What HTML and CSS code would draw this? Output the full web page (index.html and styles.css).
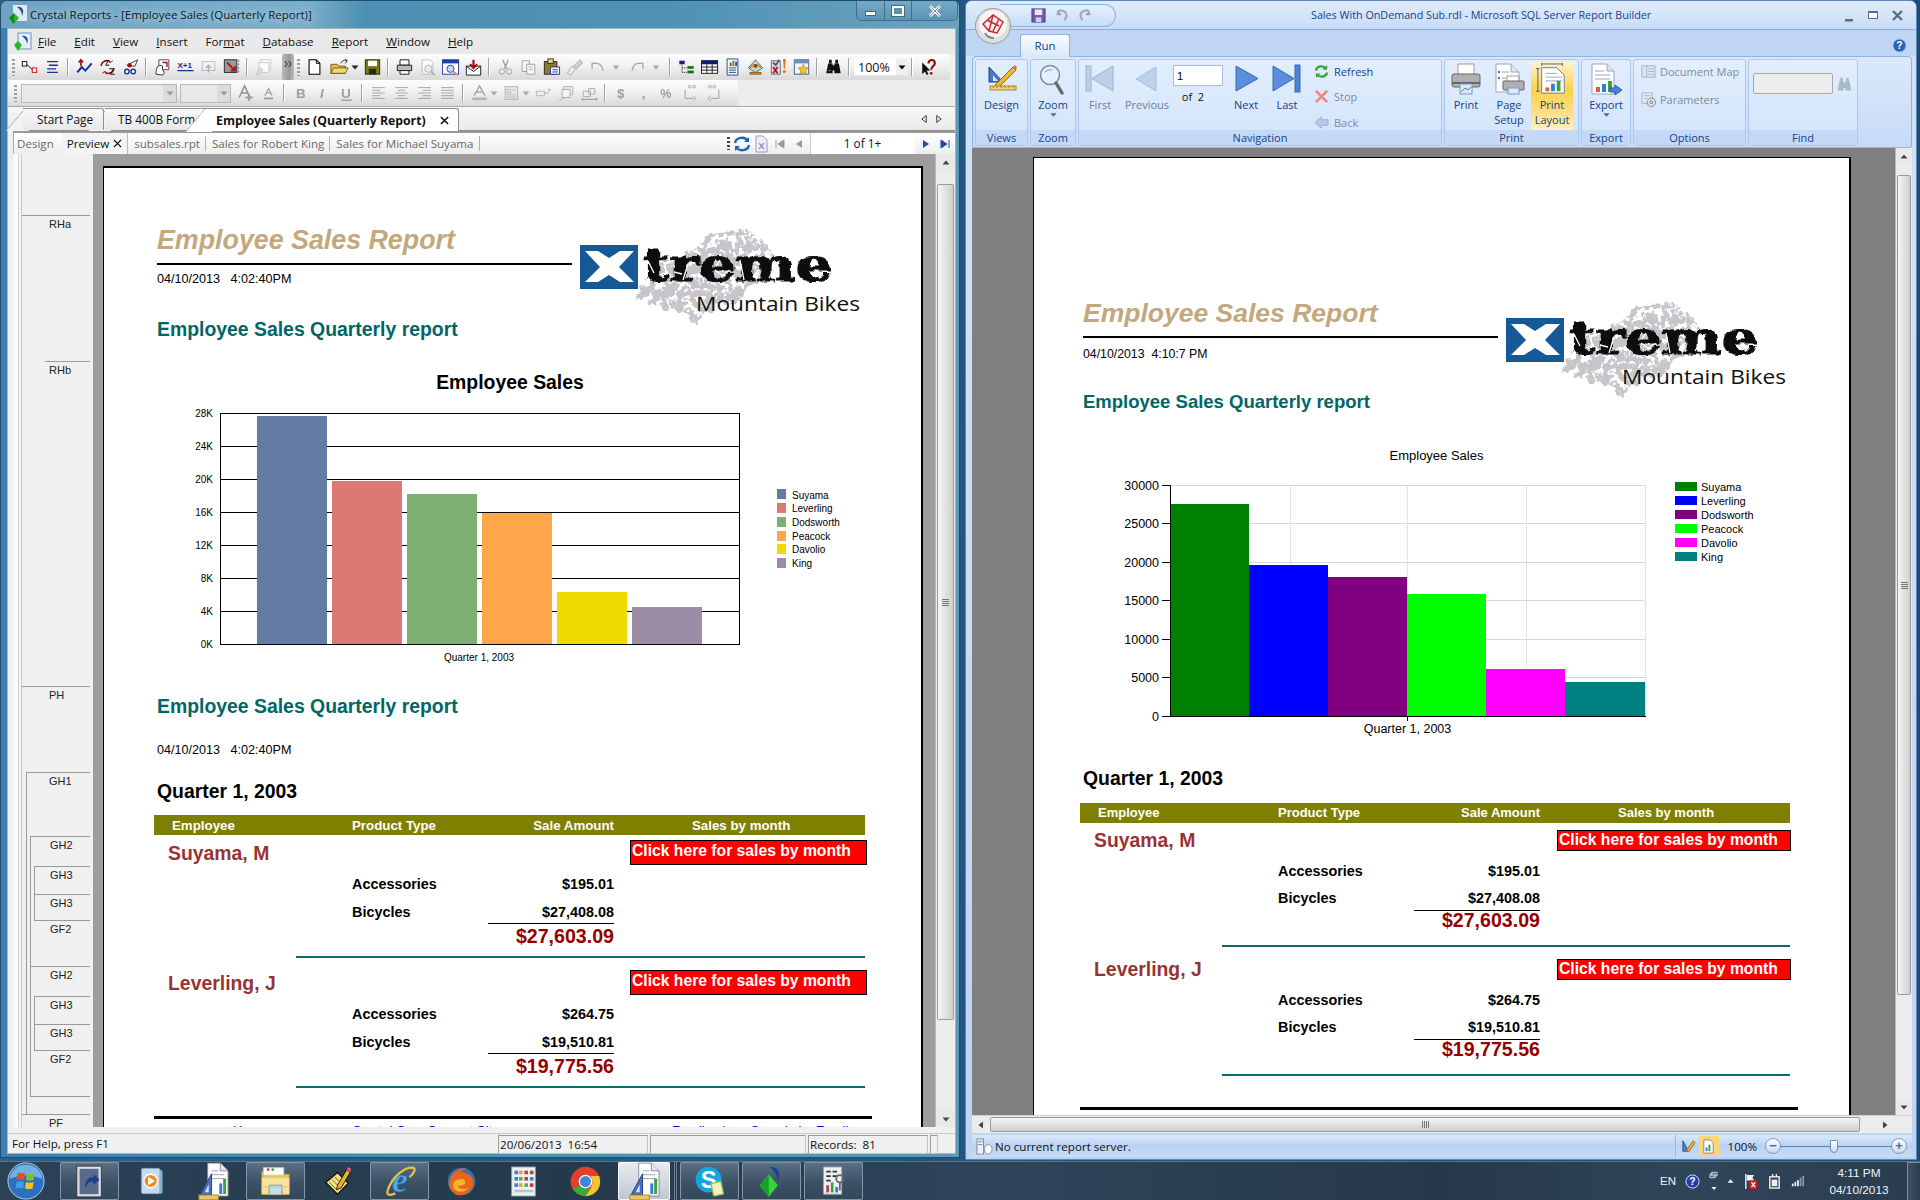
FILE: index.html
```html
<!DOCTYPE html>
<html lang="en">
<head>
<meta charset="utf-8">
<title>Crystal Reports and Report Builder</title>
<link rel="stylesheet" href="styles.css">
</head>
<body>
<svg class="defs" width="0" height="0">
  <filter id="rough" x="-5%" y="-10%" width="110%" height="120%"><feTurbulence type="fractalNoise" baseFrequency=".16" numOctaves="2" seed="4" result="n"/><feDisplacementMap in="SourceGraphic" in2="n" scale="5" xChannelSelector="R" yChannelSelector="G"/></filter>
  <filter id="tire" x="-5%" y="-5%" width="110%" height="110%"><feTurbulence type="fractalNoise" baseFrequency=".13" numOctaves="2" seed="7" result="n"/><feColorMatrix in="n" type="matrix" values="0 0 0 0 0  0 0 0 0 0  0 0 0 0 0  -14 0 0 0 8.300" result="m"/><feComposite in="SourceGraphic" in2="m" operator="in" result="c"/><feDisplacementMap in="c" in2="n" scale="12" xChannelSelector="G" yChannelSelector="R"/></filter>
  <symbol id="tri-l" viewBox="0 0 8 8"><path d="M6 0.5v7L1.5 4z"/></symbol>
  <symbol id="tri-r" viewBox="0 0 8 8"><path d="M2 0.5v7L6.5 4z"/></symbol>
  <symbol id="tri-d" viewBox="0 0 8 8"><path d="M0.5 2.5h7L4 6.5z"/></symbol>
  <symbol id="tri-u" viewBox="0 0 8 8"><path d="M0.5 5.5h7L4 1.5z"/></symbol>
  <symbol id="rb-doc" viewBox="0 0 32 40">
    <path d="M10 1h13l8 8v26H10z" fill="#fff" stroke="#8a8a9a"/><path d="M23 1v8h8" fill="#dfe6f0" stroke="#8a8a9a"/>
    <path d="M14 9h7M14 13h13M14 17h13" stroke="#9aa6b8"/>
    <rect x="22" y="22" width="3" height="11" fill="#2f7fd0"/><rect x="26" y="17" width="3" height="16" fill="#3fa03f"/>
    <path d="M2 34 14 12v22z" fill="#4a6fc0" stroke="#27407f"/><path d="M7 31l4-8v8z" fill="#d8e4f5"/>
    <rect x="1" y="34" width="20" height="5" fill="#e8c866" stroke="#a88a30"/>
  </symbol>
</svg>

<div class="desktop">
<!-- ============ Crystal Reports window ============ -->
<section class="win cr">
  <header class="cr-title">
    <svg class="cr-appicon" viewBox="0 0 20 20"><rect x="5" y="0" width="14" height="16" fill="#dfe9f4"/><path d="M9 2c5-1 8 3 5 9 0-4-2-7-5-9z" fill="#1f4f9a"/><path d="M6 8l5 5-5 6-5-6z" fill="#2bb52b"/><path d="M6 8v11l-5-6z" fill="#0d8a1d"/></svg>
    <span class="cr-title-text">Crystal Reports - [Employee Sales (Quarterly Report)]</span>
    <div class="cr-ctrl">
      <span class="cc cc-min"><i></i></span>
      <span class="cc cc-max"><i></i></span>
      <span class="cc cc-close">
        <svg viewBox="0 0 14 12" width="14" height="12"><path d="M2 1l10 10M12 1 2 11" stroke="#fff" stroke-width="3"/><path d="M2 1l10 10M12 1 2 11" stroke="#55707f" stroke-width="0.8"/></svg>
      </span>
    </div>
  </header>
  <div class="cr-client">
    <nav class="menu">
      <svg class="menu-icon" viewBox="0 0 20 20"><rect x="5" y="1" width="13" height="16" fill="#e4eefa" stroke="#6f93c0"/><path d="M9 4c5-1 7 3 5 8 0-3-2-6-5-8z" fill="#1f4f9a"/><path d="M5 9l4 4-4 6-4-6z" fill="#2bb52b"/></svg>
      <span><u>F</u>ile</span><span><u>E</u>dit</span><span><u>V</u>iew</span><span><u>I</u>nsert</span><span>For<u>m</u>at</span><span><u>D</u>atabase</span><span><u>R</u>eport</span><span><u>W</u>indow</span><span><u>H</u>elp</span>
    </nav>
    <div class="tb tb1">
      <i class="grip"></i>
      <svg class="ti" viewBox="0 0 20 20"><rect x="2" y="4" width="5" height="5" fill="#fff" stroke="#000"/><rect x="13" y="11" width="5" height="5" fill="#fff" stroke="#c00"/><path d="M7 7l6 6" stroke="#000"/></svg>
      <svg class="ti" viewBox="0 0 20 20"><path d="M4 4h12M6 8h10M4 12h10M4 16h12" stroke="#1a2f9a" stroke-width="1.5" fill="none"/></svg>
      <i class="sep"></i>
      <svg class="ti" viewBox="0 0 20 20"><path d="M2 16l5-6 4 4 7-8" stroke="#1a2f9a" stroke-width="2.2" fill="none"/><path d="M6 9V2M3.500 5 6 2l2.500 3" stroke="#a01010" stroke-width="1.800" fill="none"/></svg>
      <svg class="ti" viewBox="0 0 20 20"><path d="M3 9c0-6 8-8 10-4M17 11c0 6-8 8-10 4" stroke="#a01010" stroke-width="1.800" fill="none"/><path d="M11 2l2 3 3-2M9 18l-2-3-3 2" stroke="#a01010" fill="none"/><path d="M7 3h4l-3 5h4M12 12h5l-4 6h5" stroke="#111" stroke-width="1.100" fill="none"/></svg>
      <svg class="ti" viewBox="0 0 20 20"><circle cx="6" cy="15" r="2.500" fill="#fff" stroke="#1a2f9a" stroke-width="1.500"/><circle cx="13" cy="15" r="2.500" fill="#fff" stroke="#1a2f9a" stroke-width="1.500"/><path d="M6 8l12-6-3 7H8z" fill="#fff" stroke="#333"/><circle cx="9" cy="8" r="2.500" fill="#b01010"/></svg>
      <i class="sep"></i>
      <svg class="ti" viewBox="0 0 20 20"><path d="M6 2h11v11H6z" fill="#fff" stroke="#444"/><path d="M3 18c-1-3 1-6 1-8l3-2 3 1v4l2 3-2 3z" fill="#fff" stroke="#222"/><path d="M10 5h5v5" stroke="#b01010" stroke-width="1.500" fill="none"/></svg>
      <svg class="ti" viewBox="0 0 20 20"><text class="xp1" x="1" y="11">X+1</text><path d="M1 14h18" stroke="#1a2f9a" stroke-width="1.200"/></svg>
      <svg class="ti" viewBox="0 0 20 20" opacity=".45"><rect x="3" y="4" width="14" height="10" fill="#f4f4f4" stroke="#777"/><path d="M10 16V8M7 11l3-3 3 3" stroke="#4a6a9a" stroke-width="1.500" fill="none"/></svg>
      <svg class="ti" viewBox="0 0 20 20"><rect x="2" y="2" width="14" height="14" fill="#9a9a9a" stroke="#222"/><path d="M18 2v16" stroke="#555" stroke-dasharray="2 2"/><path d="M5 5l9 9M14 9v5H9" stroke="#b01010" stroke-width="2" fill="none"/></svg>
      <i class="sep"></i>
      <svg class="ti off" viewBox="0 0 20 20"><path d="M7 2h11v11H7z" fill="#fff" stroke="#bbb"/><path d="M5 5h11v11H5z" fill="#fff" stroke="#bbb"/><path d="M2 18l4-7 3 2-4 6z" fill="#ddd" stroke="#bbb"/></svg>
      <span class="chev"><svg viewBox="0 0 8 6" width="8" height="6"><path d="M1 0l2 3-2 3M5 0l2 3-2 3" stroke="#222" fill="none"/></svg></span>
      <i class="grip"></i>
      <svg class="ti" viewBox="0 0 20 20"><path d="M4 2h8l4 4v12H4z" fill="#fff" stroke="#000" stroke-width="1.200"/><path d="M12 2v4h4" fill="none" stroke="#000"/></svg>
      <svg class="ti ti-w" viewBox="0 0 20 20"><path d="M1 7h7l2 2h7v8H1z" fill="#e8c14e" stroke="#6a5314"/><path d="M1 17l3-6h16l-3 6z" fill="#f4d878" stroke="#6a5314"/><path d="M12 6c2-4 5-4 7-3M17 1l2 2-2 3" fill="none" stroke="#111"/></svg>
      <svg class="arrow" viewBox="0 0 8 8"><use href="#tri-d"/></svg>
      <svg class="ti" viewBox="0 0 20 20"><rect x="2" y="2" width="16" height="16" fill="#7a7a10" stroke="#222"/><rect x="5" y="3" width="10" height="6" fill="#fff"/><rect x="6" y="12" width="8" height="6" fill="#2a2a08"/></svg>
      <i class="sep"></i>
      <svg class="ti" viewBox="0 0 20 20"><path d="M5 2h10v6H5z" fill="#fff" stroke="#111"/><path d="M2 8h16v6H2z" fill="#bbb" stroke="#111"/><path d="M5 14h10v4H5z" fill="#fff" stroke="#111"/></svg>
      <svg class="ti" viewBox="0 0 20 20" opacity=".6"><path d="M4 2h9l3 3v13H4z" fill="#fff" stroke="#999"/><circle cx="11" cy="12" r="4" fill="#e6eef6" stroke="#888"/><path d="M14 15l4 4" stroke="#888" stroke-width="2"/></svg>
      <svg class="ti" viewBox="0 0 20 20"><rect x="1" y="2" width="18" height="16" fill="#fff" stroke="#1a2f9a"/><rect x="1" y="2" width="18" height="4" fill="#1a3fa5"/><circle cx="10" cy="12" r="4" fill="#bcdcf2" stroke="#1a3fa5"/><path d="M13 15l5 4" stroke="#e8921a" stroke-width="2"/></svg>
      <svg class="ti" viewBox="0 0 20 20"><path d="M2 9h16v10H2z" fill="#fff" stroke="#111"/><path d="M2 9l8 6 8-6" fill="none" stroke="#111"/><path d="M10 11V2M6 7l4 4 4-4" stroke="#a01010" stroke-width="2.400" fill="none"/></svg>
      <i class="sep"></i>
      <svg class="ti off" viewBox="0 0 20 20"><circle cx="6" cy="15" r="3" fill="none" stroke="#888"/><circle cx="14" cy="15" r="3" fill="none" stroke="#888"/><path d="M7 2l4 10M13 2 9 12" stroke="#888" stroke-width="1.500"/></svg>
      <svg class="ti off" viewBox="0 0 20 20"><path d="M3 3h8v12H3z" fill="#f6f6f6" stroke="#888"/><path d="M8 7h9v11H8z" fill="#fff" stroke="#888"/><path d="M10 10h5M10 13h5" stroke="#999"/></svg>
      <svg class="ti" viewBox="0 0 20 20"><rect x="2" y="4" width="14" height="14" fill="#8f7a30" stroke="#222"/><rect x="6" y="1" width="6" height="5" fill="#f4d878" stroke="#222"/><rect x="9" y="10" width="10" height="8" fill="#fff" stroke="#1a2f9a"/><path d="M11 13h6M11 15.500h6" stroke="#1a2f9a"/></svg>
      <svg class="ti off" viewBox="0 0 20 20"><path d="M2 17l5-8 4 3-5 7z" fill="#eee" stroke="#999"/><path d="M9 9l7-7 3 3-7 7z" fill="#ccc" stroke="#888"/></svg>
      <svg class="ti off" viewBox="0 0 20 20"><path d="M4 12V6h4M4 6c5-1 11 0 12 8" fill="none" stroke="#999" stroke-width="1.600"/></svg>
      <svg class="arrow arrow-w off" viewBox="0 0 8 8"><use href="#tri-d"/></svg>
      <svg class="ti off" viewBox="0 0 20 20"><path d="M16 12V6h-4M16 6C11 5 5 6 4 14" fill="none" stroke="#999" stroke-width="1.600"/></svg>
      <svg class="arrow arrow-w off" viewBox="0 0 8 8"><use href="#tri-d"/></svg>
      <i class="sep"></i>
      <svg class="ti" viewBox="0 0 20 20"><rect x="2" y="3" width="6" height="4" fill="#1a1ab0"/><rect x="11" y="9" width="7" height="3" fill="#107010"/><rect x="11" y="14" width="7" height="3" fill="#107010"/><path d="M5 8v8h5M5 11h5" stroke="#111" stroke-dasharray="1 1" fill="none"/></svg>
      <svg class="ti" viewBox="0 0 20 20"><rect x="1" y="3" width="18" height="14" fill="#fff" stroke="#111"/><rect x="1" y="3" width="18" height="4" fill="#111a70"/><path d="M1 10h18M1 13.500h18M7 7v10M13 7v10" stroke="#111"/></svg>
      <svg class="ti" viewBox="0 0 20 20"><path d="M4 1h12v18H4z" fill="#f4f8fc" stroke="#1a3f80"/><path d="M6 11h8M6 13.500h8M6 16h8" stroke="#1a3f80"/><rect x="7" y="5" width="2" height="4" fill="#c03030"/><rect x="10" y="3" width="2" height="6" fill="#20a020"/><rect x="13" y="4" width="2" height="5" fill="#2050c0"/></svg>
      <svg class="ti" viewBox="0 0 20 20"><path d="M2 11 10 2l8 9-8 5z" fill="#b9d8e8" stroke="#5a6a3a"/><path d="M4 11c3-5 9-5 12 0" fill="#e8c14e" stroke="#806010"/><rect x="4" y="16" width="12" height="2" fill="#c8a030" stroke="#806010"/><circle cx="10" cy="9" r="2" fill="#b03030"/></svg>
      <svg class="ti" viewBox="0 0 20 20"><path d="M2 3h10v15H2z" fill="#d8dcec" stroke="#666"/><path d="M4 10l5 7M9 10l-5 7" stroke="#c01010" stroke-width="2"/><path d="M4 5l3 3 4-6" stroke="#4a5a70" stroke-width="2" fill="none"/><path d="M15 1h3l-1 11h-1z" fill="#e87010"/><circle cx="16.500" cy="15" r="1.700" fill="#e87010"/></svg>
      <svg class="ti" viewBox="0 0 20 20"><rect x="2" y="2" width="16" height="16" fill="#eef3f8" stroke="#3a5a80"/><rect x="2" y="2" width="16" height="4" fill="#6f8fb5"/><path d="M12 7l1.800 3.600 4 .6-3 2.800.8 4-3.600-2-3.600 2 .8-4-3-2.800 4-.6z" fill="#f2c230" stroke="#9a7010" stroke-width=".6"/></svg>
      <i class="sep"></i>
      <svg class="ti" viewBox="0 0 20 20"><path d="M5 2h3v4H5zM12 2h3v4h-3z" fill="#111"/><path d="M2 17 4 6h5v11zM11 17V6h5l2 11zM9 8h2v6H9z" fill="#111"/><path d="M4 14h3" stroke="#888"/></svg>
      <i class="sep"></i>
      <span class="zoombox"><b>100%</b><span class="zoombtn"><svg viewBox="0 0 8 8" width="8" height="8"><use href="#tri-d"/></svg></span></span>
      <i class="sep"></i>
      <svg class="ti" viewBox="0 0 20 20"><path d="M3 5v13l3-3 2 4 2-1-2-4h4z" fill="#111"/><path d="M10 6c0-5 7-5 7 0 0 3-4 3-4 7" fill="none" stroke="#8a1010" stroke-width="2.400"/><circle cx="13" cy="17" r="1.500" fill="#8a1010"/></svg>
    </div>
    <div class="tb2-row">
      <div class="tb tb2">
        <i class="grip"></i>
        <span class="combo combo-font"><span class="combo-btn"><svg viewBox="0 0 8 8" width="8" height="8"><use href="#tri-d"/></svg></span></span>
        <span class="combo combo-size"><span class="combo-btn"><svg viewBox="0 0 8 8" width="8" height="8"><use href="#tri-d"/></svg></span></span>
        <svg class="ti off" viewBox="0 0 20 20"><path d="M3 15 9 2l6 13M5 10h8" stroke="#7f7f7f" stroke-width="1.800" fill="none"/><path d="M10 15h8M14 11v8" stroke="#8a8a8a" stroke-width="2"/></svg>
        <svg class="ti off" viewBox="0 0 20 20"><path d="M6 13 10 5l4 8M7 10h6" stroke="#8a8a8a" stroke-width="1.300" fill="none"/><path d="M5 16h10" stroke="#8a8a8a" stroke-width="2"/></svg>
        <i class="sep"></i>
        <svg class="ti off" viewBox="0 0 20 20"><text class="gt gt-b" x="5" y="16">B</text></svg>
        <svg class="ti off" viewBox="0 0 20 20"><text class="gt gt-i" x="6" y="16">I</text></svg>
        <svg class="ti off" viewBox="0 0 20 20"><text class="gt gt-u" x="4" y="15">U</text><path d="M4 18h12" stroke="#8a8a8a" stroke-width="1.500"/></svg>
        <i class="sep"></i>
        <svg class="ti off" viewBox="0 0 20 20"><path d="M3 4h14M3 7h9M3 10h14M3 13h9M3 16h14" stroke="#8a8a8a"/></svg>
        <svg class="ti off" viewBox="0 0 20 20"><path d="M3 4h14M6 7h8M3 10h14M6 13h8M3 16h14" stroke="#8a8a8a"/></svg>
        <svg class="ti off" viewBox="0 0 20 20"><path d="M3 4h14M8 7h9M3 10h14M8 13h9M3 16h14" stroke="#8a8a8a"/></svg>
        <svg class="ti off" viewBox="0 0 20 20"><path d="M3 4h14M3 7h14M3 10h14M3 13h14M3 16h14" stroke="#8a8a8a"/></svg>
        <i class="sep"></i>
        <svg class="ti off" viewBox="0 0 20 20"><path d="M4 13 10 2l6 11M6 9h8" stroke="#8a8a8a" stroke-width="1.500" fill="none"/><rect x="2" y="15" width="16" height="3" fill="#aaa"/></svg>
        <svg class="arrow off" viewBox="0 0 8 8"><use href="#tri-d"/></svg>
        <svg class="ti off" viewBox="0 0 20 20"><rect x="3" y="3" width="14" height="14" fill="#e6e6e6" stroke="#9a9a9a"/><path d="M5 6h4v4H5zM11 7h4M5 12h10M5 14.500h10" stroke="#aaa" fill="none"/></svg>
        <svg class="arrow off" viewBox="0 0 8 8"><use href="#tri-d"/></svg>
        <svg class="ti off" viewBox="0 0 20 20"><rect x="2" y="8" width="9" height="5" fill="#f0f0f0" stroke="#aaa"/><path d="M11 10h5M15 5l3 3M18 5l-3 3" stroke="#999"/></svg>
        <svg class="ti off" viewBox="0 0 20 20"><path d="M7 3h10v9H7z" fill="#eee" stroke="#999"/><path d="M5 6h9v9H5z" fill="#f4f4f4" stroke="#999"/><path d="M2 19l4-4 2 2" stroke="#999" fill="none"/></svg>
        <svg class="ti off" viewBox="0 0 20 20"><path d="M3 8h8v6H3zM9 5h7v6H9z" fill="#eee" stroke="#999"/><path d="M2 17h16M2 15.500v3M18 15.500v3" stroke="#777"/></svg>
        <i class="sep"></i>
        <svg class="ti off" viewBox="0 0 20 20"><text class="gt gt-b" x="5" y="16">$</text></svg>
        <svg class="ti off" viewBox="0 0 20 20"><text class="gt gt-b" x="7" y="15">,</text></svg>
        <svg class="ti off" viewBox="0 0 20 20"><text class="gt gt-b gt-wide" x="2" y="16">%</text></svg>
        <svg class="ti off" viewBox="0 0 20 20"><circle cx="9" cy="3" r="1.500" fill="none" stroke="#888"/><circle cx="14" cy="3" r="1.500" fill="none" stroke="#888"/><path d="M4 6v10h9M13 13l3 3-3 3" stroke="#888" fill="none"/></svg>
        <svg class="ti off" viewBox="0 0 20 20"><circle cx="6" cy="3" r="1.500" fill="none" stroke="#888"/><circle cx="11" cy="3" r="1.500" fill="none" stroke="#888"/><path d="M16 6v10H7M7 13l-3 3 3 3" stroke="#888" fill="none"/></svg>
      </div>
    </div>
    <div class="tabs">
      <span class="tab">Start Page</span>
      <span class="tab tab-2">TB 400B Form</span>
      <span class="tab tab-on">Employee Sales (Quarterly Report)<svg class="x" viewBox="0 0 10 10" width="9" height="9"><path d="M1 1l8 8M9 1 1 9" stroke="#000" stroke-width="1.500"/></svg></span>
      <span class="tabs-nav">
        <svg viewBox="0 0 8 10" width="7" height="10"><path d="M6 1v8L1 5z" fill="none" stroke="#222"/></svg>
        <svg viewBox="0 0 8 10" width="7" height="10"><path d="M2 1v8l5-4z" fill="none" stroke="#222"/></svg>
      </span>
    </div>
    <div class="subtabs">
      <span class="st st-dim">Design</span>
      <span class="st st-on">Preview<svg class="x" viewBox="0 0 10 10" width="9" height="9"><path d="M1 1l8 8M9 1 1 9" stroke="#000" stroke-width="1.300"/></svg></span>
      <span class="st st-doc">subsales.rpt</span>
      <span class="st st-doc">Sales for Robert King</span>
      <span class="st st-doc">Sales for Michael Suyama</span>
      <span class="subnav">
        <i class="grip grip-s"></i>
        <svg class="ni" viewBox="0 0 18 18"><path d="M2 8c1-6 10-7 13-2M16 10c-1 6-10 7-13 2" fill="none" stroke="#1c66b8" stroke-width="2.400"/><path d="M16 2v5h-5M2 16v-5h5" fill="#1c66b8"/></svg>
        <svg class="ni" viewBox="0 0 18 18"><path d="M4 1h7l4 4v12H4z" fill="#eef0f8" stroke="#9a9ac0"/><path d="M7 8l5 6M12 8l-5 6" stroke="#9a9ac0" stroke-width="1.500"/></svg>
        <svg class="nv" viewBox="0 0 12 12"><path d="M2 2v8M10 2v8L4 6z" stroke="#999" fill="#999"/></svg>
        <svg class="nv" viewBox="0 0 12 12"><path d="M9 2v8L3 6z" fill="#999"/></svg>
        <span class="pager">1 of 1+</span>
        <svg class="nv" viewBox="0 0 12 12"><path d="M3 2v8l6-4z" fill="#1f4e96"/></svg>
        <svg class="nv" viewBox="0 0 12 12"><path d="M10 2v8M2 2v8l6-4z" stroke="#1f4e96" fill="#1f4e96"/></svg>
      </span>
    </div>
    <div class="cr-body">
      <aside class="gutter">
        <div class="gutter-in">
          <div class="gs gs-top"></div>
          <div class="gs gs-rha">RHa</div>
          <div class="gs gs-rhb">RHb</div>
          <div class="gs gs-ph">PH</div>
          <div class="gbox g1">
            <div class="gs gs-gh1">GH1</div>
            <div class="gbox g2">
              <div class="gs gs-gh2">GH2</div>
              <div class="gbox g3">
                <div class="gs gs-gh3">GH3</div>
                <div class="gs gs-gh3b">GH3</div>
              </div>
              <div class="gs gs-gf2">GF2</div>
              <div class="gs gs-gh2 gs-line">GH2</div>
              <div class="gbox g3 g3-line">
                <div class="gs gs-gh3">GH3</div>
                <div class="gs gs-gh3b">GH3</div>
              </div>
              <div class="gs gs-gf2">GF2</div>
            </div>
            <div class="gs gs-gap"></div>
          </div>
          <div class="gs gs-pf">PF</div>
        </div>
      </aside>
      <main class="view">
        <article class="page page-l">
          <div class="rep-head">
            <div class="rep-head-l">
              <h1 class="rt">Employee Sales Report</h1>
              <div class="rt-rule"></div>
              <div class="rdate">04/10/2013   4:02:40PM</div>
            </div>
            <svg class="logo" viewBox="0 0 300 105" width="300" height="105">
              <path d="M177 10l10 6 6 3 10 14-5 9 2 8-12 11-10 4-6 14-14 5-10-2-22 21-12-9-19-5-29-11 8-14 6-6 4-10 13-4 10-3 7-8 14-5 5-10 14-7z" fill="#c6c6ca" filter="url(#tire)"/>
              <rect x="10" y="25" width="58" height="44" fill="#155a97"/>
              <path d="M15 31h13l11 7 11-7h14L49 47l15 15H50L39 55l-11 7H15l15-15z" fill="#fff"/>
              <text class="lg-treme" x="73" y="61" textLength="189" lengthAdjust="spacingAndGlyphs" filter="url(#rough)">treme</text>
              <path d="M78 41l6 12M118 44l-5 16M145 50l8 6M170 40l4 20M205 48l-6 10M245 50l8 4M104 52l8 2M150 40l-4 6" stroke="#fff" stroke-width="1.300"/>
              <text class="lg-mb" x="126" y="91" textLength="164" lengthAdjust="spacingAndGlyphs">Mountain Bikes</text>
            </svg>
          </div>
          <h2 class="rh rh-1">Employee Sales Quarterly report</h2>
          <svg class="chart chart-l" viewBox="0 0 817 312" width="817" height="312">
            <text class="cl-title" x="406" y="29" text-anchor="middle">Employee Sales</text>
            <rect x="116.500" y="53.500" width="519" height="231" fill="#fff" stroke="#000"/>
            <path d="M116 86.500h520M116 119.500h520M116 152.500h520M116 185.500h520M116 218.500h520M116 251.500h520" stroke="#000"/>
            <rect x="153" y="56" width="70" height="228" fill="#637ca4"/>
            <rect x="228" y="121" width="70" height="163" fill="#de7874"/>
            <rect x="303" y="134" width="70" height="150" fill="#7db174"/>
            <rect x="378" y="153" width="70" height="131" fill="#ffa54a"/>
            <rect x="453" y="232" width="70" height="52" fill="#efdb00"/>
            <rect x="528" y="247" width="70" height="37" fill="#9c8ca6"/>
            <g class="cl-ax" text-anchor="end">
              <text x="109" y="57">28K</text><text x="109" y="90">24K</text><text x="109" y="123">20K</text><text x="109" y="156">16K</text><text x="109" y="189">12K</text><text x="109" y="222">8K</text><text x="109" y="255">4K</text><text x="109" y="288">0K</text>
            </g>
            <text class="cl-ax" x="375" y="301" text-anchor="middle">Quarter 1, 2003</text>
            <rect x="673" y="129" width="9" height="10" fill="#637ca4"/><rect x="673" y="143" width="9" height="10" fill="#de7874"/><rect x="673" y="157" width="9" height="10" fill="#7db174"/><rect x="673" y="171" width="9" height="10" fill="#ffa54a"/><rect x="673" y="184" width="9" height="10" fill="#efdb00"/><rect x="673" y="198" width="9" height="10" fill="#9c8ca6"/>
            <g class="cl-ax">
              <text x="688" y="139">Suyama</text><text x="688" y="152">Leverling</text><text x="688" y="166">Dodsworth</text><text x="688" y="180">Peacock</text><text x="688" y="193">Davolio</text><text x="688" y="207">King</text>
            </g>
          </svg>
          <h2 class="rh rh-2">Employee Sales Quarterly report</h2>
          <div class="rdate rdate-2">04/10/2013   4:02:40PM</div>
          <h3 class="rq">Quarter 1, 2003</h3>
          <div class="rtable">
            <div class="rhead"><span class="c-emp">Employee</span><span class="c-pt">Product Type</span><span class="c-amt">Sale Amount</span><span class="c-mon">Sales by month</span></div>
            <div class="grp">
              <div class="g-top"><span class="emp">Suyama, M</span><a class="btn">Click here for sales by month</a></div>
              <div class="g-line"><span>Accessories</span><span>$195.01</span></div>
              <div class="g-line"><span>Bicycles</span><span>$27,408.08</span></div>
              <div class="g-sum">$27,603.09</div>
              <div class="g-rule"></div>
            </div>
            <div class="grp">
              <div class="g-top"><span class="emp">Leverling, J</span><a class="btn">Click here for sales by month</a></div>
              <div class="g-line"><span>Accessories</span><span>$264.75</span></div>
              <div class="g-line"><span>Bicycles</span><span>$19,510.81</span></div>
              <div class="g-sum">$19,775.56</div>
              <div class="g-rule"></div>
            </div>
            <div class="rfoot"></div>
            <div class="rlinks"><span class="lk-a">Home</span><span class="lk-b">Crystal Care Support Site</span><span class="lk-c">Feedback on Sample by Email</span></div>
          </div>
        </article>
      </main>
      <div class="vscroll">
        <span class="sb-arrow"><svg viewBox="0 0 8 8" width="8" height="8"><use href="#tri-u"/></svg></span>
        <span class="sb-track"><span class="sb-thumb"><i class="sb-grip"></i></span></span>
        <span class="sb-arrow"><svg viewBox="0 0 8 8" width="8" height="8"><use href="#tri-d"/></svg></span>
      </div>
    </div>
    <footer class="cr-status">
      <span class="sc sc-help">For Help, press F1</span>
      <span class="sc sc-date">20/06/2013  16:54</span>
      <span class="sc sc-blank"></span>
      <span class="sc sc-rec">Records:  81</span>
      <span class="sc sc-mini"></span>
    </footer>
  </div>
</section>

<!-- ============ Report Builder window ============ -->
<section class="win rb">
  <header class="rb-title">
    <span class="orb">
      <svg viewBox="0 0 36 36" width="36" height="36"><circle cx="18" cy="18" r="17.500" fill="#dedede" stroke="#9a9a9a"/><circle cx="18" cy="16" r="14" fill="#f4f4f4"/><path d="M8 16 18 7l10 7-6 11-8-2zM12 12l12 6M18 7l-4 16M24 11l-6 12" fill="none" stroke="#d2232a" stroke-width="1.500"/><path d="M10 25c2 4 6 5 9 5" stroke="#888" fill="none" stroke-width="2"/></svg>
    </span>
    <div class="qat">
      <svg viewBox="0 0 16 16" width="15" height="15"><rect x="1" y="1" width="14" height="14" fill="#6d5ea8" stroke="#4a3a84"/><rect x="4" y="1.500" width="8" height="6" fill="#e8e8f4"/><rect x="5" y="10" width="6" height="5" fill="#cfd0e8"/></svg>
      <svg viewBox="0 0 16 16" width="14" height="14"><path d="M4 8V3M4 3l-1 4h4M4 3c6-1 10 2 9 7l-2 4" fill="none" stroke="#9da7b5" stroke-width="2.400"/></svg>
      <svg viewBox="0 0 16 16" width="14" height="14"><path d="M12 3C6 2 2 5 3 10l2 4M12 3l1 4H9" fill="none" stroke="#9da7b5" stroke-width="2.400"/></svg>
    </div>
    <span class="rb-title-text">Sales With OnDemand Sub.rdl - Microsoft SQL Server Report Builder</span>
    <div class="rb-ctrl">
      <span class="rc"><svg viewBox="0 0 14 14" width="14" height="14"><rect x="2" y="11" width="8" height="2.500" fill="#5d6d80"/></svg></span>
      <span class="rc"><svg viewBox="0 0 14 14" width="14" height="14"><rect x="1.500" y="3.500" width="9" height="7" fill="#fff" stroke="#5d6d80"/><rect x="1" y="3" width="10" height="2" fill="#5d6d80"/></svg></span>
      <span class="rc"><svg viewBox="0 0 14 14" width="14" height="14"><path d="M2 3l9 9M11 3l-9 9" stroke="#5d6d80" stroke-width="2.400"/></svg></span>
    </div>
  </header>
  <div class="rb-tabs">
    <span class="rb-tab">Run</span>
    <svg class="rb-help" viewBox="0 0 16 16" width="15" height="15"><circle cx="8" cy="8" r="7" fill="#2d63b4" stroke="#a9c6ec"/><text class="rb-help-q" x="8" y="12" text-anchor="middle">?</text></svg>
  </div>
  <div class="ribbon">
    <div class="rg rg-views">
      <div class="rg-in">
        <div class="big">
          <svg class="big-i" viewBox="0 0 32 32"><path d="M3 4 17 19H3z" fill="#4a78c4" stroke="#27407f"/><path d="M7 12l5 6H7z" fill="#d8e4f5"/><path d="M10 21 27 4l3 3-17 17-5 2z" fill="#f2b632" stroke="#8a6a10"/><path d="M27 4l3 3 1-3-2-2z" fill="#e06a6a"/><rect x="4" y="23" width="26" height="4" fill="#f0d070" stroke="#a88a30"/><path d="M7 23v2M11 23v2M15 23v2M19 23v2M23 23v2M27 23v2" stroke="#a88a30"/></svg>
          <span>Design</span>
        </div>
      </div>
      <div class="rg-lab">Views</div>
    </div>
    <div class="rg rg-zoom">
      <div class="rg-in">
        <div class="big">
          <svg class="big-i" viewBox="0 0 32 32"><circle cx="13" cy="12" r="9.500" fill="#e4f1fc" stroke="#7d8a98" stroke-width="1.500"/><path d="M7 10c2-4 6-5 10-3-3 0-7 1-10 3z" fill="#8cb9e6"/><path d="M19 20l6 10" stroke="#6a6a6a" stroke-width="3.400" stroke-linecap="round"/></svg>
          <span>Zoom</span>
          <svg class="dd" viewBox="0 0 8 8"><use href="#tri-d"/></svg>
        </div>
      </div>
      <div class="rg-lab">Zoom</div>
    </div>
    <div class="rg rg-nav">
      <div class="rg-in">
        <div class="big big-nav big-off">
          <svg class="big-i" viewBox="0 0 32 32"><rect x="2" y="3" width="5" height="25" fill="#bcd0ea" stroke="#98b3d6"/><path d="M29 3v25L8 15.500z" fill="#bcd0ea" stroke="#98b3d6"/></svg>
          <span>First</span>
        </div>
        <div class="big big-nav big-off">
          <svg class="big-i" viewBox="0 0 32 32"><path d="M25 4v24L5 16z" fill="#bcd0ea" stroke="#a4bddd"/></svg>
          <span>Previous</span>
        </div>
        <div class="page-box"><input class="page-input" value="1" aria-label="Page"><span class="page-of">of  2</span></div>
        <div class="big big-nav">
          <svg class="big-i" viewBox="0 0 32 32"><path d="M6 3v25l22-12.500z" fill="#5b8ede" stroke="#3a68b6"/></svg>
          <span>Next</span>
        </div>
        <div class="big big-nav">
          <svg class="big-i" viewBox="0 0 32 32"><path d="M2 3v25l21-12.500z" fill="#5b8ede" stroke="#3a68b6"/><rect x="24" y="2" width="5" height="27" fill="#4f82d6" stroke="#3a68b6"/></svg>
          <span>Last</span>
        </div>
        <div class="small-col">
          <div class="sm"><svg viewBox="0 0 16 16" width="15" height="15"><path d="M2 7c1-5 8-6 11-2M14 9c-1 5-8 6-11 2" fill="none" stroke="#3e9e3e" stroke-width="2.400"/><path d="M14 1v5H9zM2 15v-5h5z" fill="#3e9e3e"/></svg><span>Refresh</span></div>
          <div class="sm sm-off"><svg viewBox="0 0 16 16" width="15" height="15"><path d="M2 2l12 12M14 2 2 14" stroke="#ec8a7a" stroke-width="3"/></svg><span>Stop</span></div>
          <div class="sm sm-off"><svg viewBox="0 0 16 16" width="15" height="15"><path d="M8 2v3h7v6H8v3L1 8z" fill="#b3cbe9" stroke="#95b1d6"/></svg><span>Back</span></div>
        </div>
      </div>
      <div class="rg-lab">Navigation</div>
    </div>
    <div class="rg rg-print">
      <div class="rg-in">
        <div class="big big-pr">
          <svg class="big-i" viewBox="0 0 32 32"><rect x="8" y="1" width="16" height="11" fill="#fff" stroke="#999"/><rect x="2" y="11" width="28" height="13" rx="2" fill="#b0b0b0" stroke="#666"/><rect x="2" y="19" width="28" height="2" fill="#666"/><rect x="10" y="21" width="12" height="10" fill="#dde9f8" stroke="#7c9ac4"/><path d="M11 29l4-4 3 2 3-3" stroke="#4a7ac0" fill="none"/></svg>
          <span>Print</span>
        </div>
        <div class="big big-pr">
          <svg class="big-i" viewBox="0 0 32 32"><path d="M3 1h15l8 8v20H3z" fill="#fff" stroke="#9aa6b8"/><path d="M18 1v8h8" fill="#dfe6f0" stroke="#9aa6b8"/><circle cx="6" cy="9" r="1.200" fill="#4a7ac0"/><circle cx="6" cy="15" r="1.200" fill="#4a7ac0"/><path d="M9 9h7M9 15h4" stroke="#9aa6b8"/><rect x="14" y="13" width="12" height="7" fill="#fff" stroke="#999"/><rect x="10" y="18" width="21" height="9" rx="1" fill="#b0b0b0" stroke="#666"/><rect x="15" y="25" width="11" height="6" fill="#dde9f8" stroke="#7c9ac4"/></svg>
          <span>Page<br>Setup</span>
        </div>
        <div class="big big-pr big-hot">
          <svg class="big-i" viewBox="0 0 34 34"><path d="M6 1h22M6 0v3M28 0v3M2 6v24M0 6h4M0 30h4" stroke="#4a5a80" fill="none"/><path d="M6 5h16l8 8v19H6z" fill="#fff" stroke="#6a7a90"/><path d="M10 11h12M10 15h18M10 19h18" stroke="#9aa6b8"/><rect x="10" y="26" width="4" height="4" fill="#e85a30"/><rect x="16" y="22" width="4" height="8" fill="#2f7fd0"/><rect x="22" y="19" width="4" height="11" fill="#3fa03f"/></svg>
          <span>Print<br>Layout</span>
        </div>
      </div>
      <div class="rg-lab">Print</div>
    </div>
    <div class="rg rg-export">
      <div class="rg-in">
        <div class="big">
          <svg class="big-i" viewBox="0 0 32 32"><path d="M2 1h15l7 7v23H2z" fill="#fff" stroke="#9aa6b8"/><path d="M17 1v7h7" fill="#dfe6f0" stroke="#9aa6b8"/><path d="M5 8h9M5 12h15M5 16h15" stroke="#9aa6b8"/><rect x="6" y="24" width="4" height="5" fill="#e85a30"/><rect x="12" y="21" width="4" height="8" fill="#2f7fd0"/><rect x="18" y="18" width="4" height="11" fill="#3fa03f"/><path d="M20 25h5v-3l7 5-7 5v-3h-5z" fill="#4f82d6" stroke="#2c5aa0"/></svg>
          <span>Export</span>
          <svg class="dd" viewBox="0 0 8 8"><use href="#tri-d"/></svg>
        </div>
      </div>
      <div class="rg-lab">Export</div>
    </div>
    <div class="rg rg-opt">
      <div class="rg-in rg-in-col">
        <div class="sm sm-off sm-wide"><svg viewBox="0 0 16 16" width="15" height="15"><rect x="1" y="2" width="14" height="12" fill="#dde6f3" stroke="#9fb0c8"/><path d="M6 2v12M8 5h6M8 8h6M8 11h6" stroke="#9fb0c8"/></svg><span>Document Map</span></div>
        <div class="sm sm-off sm-wide"><svg viewBox="0 0 16 16" width="15" height="15"><rect x="1" y="1" width="11" height="11" fill="#e8eef6" stroke="#9fb0c8"/><path d="M3 4h7M3 7h4" stroke="#9fb0c8"/><circle cx="11" cy="11" r="4.500" fill="#dfe4ea" stroke="#888"/><circle cx="11" cy="11" r="1.500" fill="none" stroke="#777"/></svg><span>Parameters</span></div>
      </div>
      <div class="rg-lab">Options</div>
    </div>
    <div class="rg rg-find">
      <div class="rg-in rg-in-find">
        <span class="find-box"></span>
        <svg viewBox="0 0 20 20" width="17" height="17"><path d="M5 2h3v4H5zM12 2h3v4h-3z" fill="#a9b8cb"/><path d="M2 17 4 6h5v11zM11 17V6h5l2 11zM9 8h2v6H9z" fill="#a9b8cb"/></svg>
      </div>
      <div class="rg-lab">Find</div>
    </div>
  </div>
  <div class="rb-body">
    <main class="rb-view">
      <article class="page page-r">
        <div class="rep-head">
          <div class="rep-head-l">
            <h1 class="rt">Employee Sales Report</h1>
            <div class="rt-rule"></div>
            <div class="rdate">04/10/2013  4:10:7 PM</div>
          </div>
          <svg class="logo" viewBox="0 0 300 105" width="300" height="105">
            <path d="M177 10l10 6 6 3 10 14-5 9 2 8-12 11-10 4-6 14-14 5-10-2-22 21-12-9-19-5-29-11 8-14 6-6 4-10 13-4 10-3 7-8 14-5 5-10 14-7z" fill="#c6c6ca" filter="url(#tire)"/>
            <rect x="10" y="25" width="58" height="44" fill="#155a97"/>
            <path d="M15 31h13l11 7 11-7h14L49 47l15 15H50L39 55l-11 7H15l15-15z" fill="#fff"/>
            <text class="lg-treme" x="73" y="61" textLength="189" lengthAdjust="spacingAndGlyphs" filter="url(#rough)">treme</text>
            <path d="M78 41l6 12M118 44l-5 16M145 50l8 6M170 40l4 20M205 48l-6 10M245 50l8 4M104 52l8 2M150 40l-4 6" stroke="#fff" stroke-width="1.300"/>
            <text class="lg-mb" x="126" y="91" textLength="164" lengthAdjust="spacingAndGlyphs">Mountain Bikes</text>
          </svg>
        </div>
        <h2 class="rh rh-1">Employee Sales Quarterly report</h2>
        <svg class="chart chart-r" viewBox="0 0 817 312" width="817" height="312">
          <text class="cr-ctitle" x="402.500" y="30" text-anchor="middle">Employee Sales</text>
          <path d="M136 55.500h475M136 93.500h475M136 132.500h475M136 170.500h475M136 209.500h475M136 247.500h475" stroke="#d8d8d8"/>
          <path d="M256.500 55v231M373.500 55v231M492.500 55v231M611.500 55v231" stroke="#cfcfcf" stroke-dasharray="1 1"/>
          <rect x="136" y="74" width="79" height="212" fill="#008000"/>
          <rect x="215" y="135" width="79" height="151" fill="#0000ff"/>
          <rect x="294" y="147" width="79" height="139" fill="#800080"/>
          <rect x="373" y="164" width="79" height="122" fill="#00ff00"/>
          <rect x="452" y="239" width="79" height="47" fill="#ff00ff"/>
          <rect x="531" y="252" width="80" height="34" fill="#008080"/>
          <path d="M136.500 55v232M128 286.500h484M128 55.500h8M128 93.500h8M128 132.500h8M128 170.500h8M128 209.500h8M128 247.500h8M373.500 286v5" stroke="#000"/>
          <g class="cr-ax" text-anchor="end">
            <text x="125" y="60">30000</text><text x="125" y="98">25000</text><text x="125" y="137">20000</text><text x="125" y="175">15000</text><text x="125" y="214">10000</text><text x="125" y="252">5000</text><text x="125" y="291">0</text>
          </g>
          <text class="cr-ax" x="373.500" y="303" text-anchor="middle">Quarter 1, 2003</text>
          <rect x="641" y="52" width="22" height="9" fill="#008000"/><rect x="641" y="66" width="22" height="9" fill="#0000ff"/><rect x="641" y="80" width="22" height="9" fill="#800080"/><rect x="641" y="94" width="22" height="9" fill="#00ff00"/><rect x="641" y="108" width="22" height="9" fill="#ff00ff"/><rect x="641" y="122" width="22" height="9" fill="#008080"/>
          <g class="cr-leg">
            <text x="667" y="61">Suyama</text><text x="667" y="75">Leverling</text><text x="667" y="89">Dodsworth</text><text x="667" y="103">Peacock</text><text x="667" y="117">Davolio</text><text x="667" y="131">King</text>
          </g>
        </svg>
        <h3 class="rq">Quarter 1, 2003</h3>
        <div class="rtable">
          <div class="rhead"><span class="c-emp">Employee</span><span class="c-pt">Product Type</span><span class="c-amt">Sale Amount</span><span class="c-mon">Sales by month</span></div>
          <div class="grp">
            <div class="g-top"><span class="emp">Suyama, M</span><a class="btn">Click here for sales by month</a></div>
            <div class="g-line"><span>Accessories</span><span>$195.01</span></div>
            <div class="g-line"><span>Bicycles</span><span>$27,408.08</span></div>
            <div class="g-sum">$27,603.09</div>
            <div class="g-rule"></div>
          </div>
          <div class="grp">
            <div class="g-top"><span class="emp">Leverling, J</span><a class="btn">Click here for sales by month</a></div>
            <div class="g-line"><span>Accessories</span><span>$264.75</span></div>
            <div class="g-line"><span>Bicycles</span><span>$19,510.81</span></div>
            <div class="g-sum">$19,775.56</div>
            <div class="g-rule"></div>
          </div>
          <div class="rfoot"></div>
        </div>
      </article>
    </main>
    <div class="vscroll vscroll-r">
      <span class="sb-arrow"><svg viewBox="0 0 8 8" width="8" height="8"><use href="#tri-u"/></svg></span>
      <span class="sb-track"><span class="sb-thumb"><i class="sb-grip"></i></span></span>
      <span class="sb-arrow"><svg viewBox="0 0 8 8" width="8" height="8"><use href="#tri-d"/></svg></span>
    </div>
  </div>
  <div class="hscroll">
    <span class="sb-arrow"><svg viewBox="0 0 8 8" width="8" height="8"><use href="#tri-l"/></svg></span>
    <span class="hs-thumb"><i class="hs-grip"></i></span>
    <span class="sb-arrow"><svg viewBox="0 0 8 8" width="8" height="8"><use href="#tri-r"/></svg></span>
  </div>
  <footer class="rb-status">
    <svg class="rb-st-ico" viewBox="0 0 18 18" width="17" height="17"><rect x="1" y="1" width="7" height="16" fill="#eef1f6" stroke="#7a8aa0"/><path d="M2 4h5M2 7h5" stroke="#7a8aa0"/><ellipse cx="13" cy="12" rx="4" ry="5" fill="#fff" stroke="#7a8aa0"/></svg>
    <span class="rb-st-text">No current report server.</span>
    <div class="rb-st-right">
      <span class="st-ico"><svg viewBox="0 0 16 16" width="15" height="15"><path d="M2 2l6 11H2z" fill="#5a80c4" stroke="#344f85"/><path d="M6 12 13 2l2 2-7 10z" fill="#f2b632" stroke="#8a6a10"/></svg></span>
      <span class="st-ico st-ico-on"><svg viewBox="0 0 16 16" width="15" height="15"><path d="M3 1h7l3 3v11H3z" fill="#fff" stroke="#7a8aa0"/><rect x="5" y="9" width="2" height="4" fill="#2f7fd0"/><rect x="8" y="6" width="2" height="7" fill="#3fa03f"/></svg></span>
      <span class="rb-pct">100%</span>
      <span class="zb">−</span>
      <span class="slider"><i></i></span>
      <span class="zb">+</span>
    </div>
  </footer>
</section>
</div>

<!-- ============ Taskbar ============ -->
<footer class="taskbar">
  <span class="start">
    <svg viewBox="0 0 40 40" width="38" height="38"><circle cx="20" cy="20" r="19" fill="#2a6fc0" stroke="#bcd4ea" stroke-width="1"/><path d="M3 18a17 15 0 0 1 34 0c-10-5-24-5-34 0z" fill="#8fc3ee" opacity=".75"/><path d="M11 12c3-1 5-1 8 0l-1 7c-3-1-5-1-8 0z" fill="#e2522a"/><path d="M21 12c3 1 5 1 8 0l-1 7c-3 1-5 1-8 0z" fill="#7ebf3a"/><path d="M10 21c3-1 5-1 8 0l-1 7c-3-1-5-1-8 0z" fill="#3e9de0"/><path d="M20 21c3 1 5 1 8 0l-1 7c-3 1-5 1-8 0z" fill="#f4c430"/></svg>
  </span>
  <span class="tk tk-on"><svg viewBox="0 0 32 36" width="29" height="33"><rect x="2" y="1" width="27" height="34" fill="#dbe0e8" stroke="#333"/><rect x="5" y="4" width="21" height="28" fill="#5a6a8a"/><path d="M11 25c0-9 4-12 10-12l-1-4 7 7-7 6v-4c-5 0-6 2-9 7z" fill="#1f3f8a"/></svg></span>
  <span class="tk"><svg viewBox="0 0 32 36" width="27" height="32"><rect x="7" y="5" width="22" height="28" rx="2" fill="#8fb7d8"/><rect x="4" y="3" width="22" height="30" rx="2" fill="#c5dcee" stroke="#7a9ebe"/><circle cx="15" cy="18" r="8" fill="#f08a20" stroke="#fff" stroke-width="1.500"/><path d="M12 13v10l8-5z" fill="#fff"/></svg></span>
  <span class="tk"><svg width="31" height="39" viewBox="0 0 32 40"><use href="#rb-doc"/></svg></span>
  <span class="tk tk-on"><svg viewBox="0 0 36 36" width="33" height="33"><path d="M3 7h10l3 3h17v22H3z" fill="#e9c85a" stroke="#b08a28"/><rect x="5" y="3" width="22" height="8" fill="#fff" stroke="#ccc"/><circle cx="10" cy="5" r="1.500" fill="#d33"/><circle cx="15" cy="5" r="1.500" fill="#3a3"/><path d="M3 14h30v18H3z" fill="#f6e29a"/><path d="M11 32V22h14v10" fill="#bfe0f0" stroke="#6a9ab8"/><path d="M3 24h30" stroke="#d8c070"/></svg></span>
  <span class="tk"><svg viewBox="0 0 32 36" width="29" height="33"><path d="M3 19 16 8l12 12-12 12z" fill="#f4e27a" stroke="#111" stroke-width="1.500"/><path d="M7 19l9 9M10 16l9 9M13 13l9 9" stroke="#555"/><path d="M16 22 26 5l4 3-10 17-5 2z" fill="#e8b032" stroke="#111"/><path d="M26 5l4 3 1-4-3-2z" fill="#e05a70"/></svg></span>
  <span class="tk tk-on"><svg viewBox="0 0 36 36" width="34" height="34"><text class="ie-e" x="18" y="30" text-anchor="middle">e</text><path d="M5 28C10 12 24 3 32 4 35 5 33 10 28 14" fill="none" stroke="#f0c040" stroke-width="2.400"/><path d="M5 28c-2 5 3 6 8 3" fill="none" stroke="#f0c040" stroke-width="2.400"/></svg></span>
  <span class="tk"><svg viewBox="0 0 36 36" width="33" height="33"><circle cx="18" cy="18" r="15" fill="#3a6fb0"/><path d="M5 23C3 10 15 2 24 4c-4 1-6 2-7 4 6-1 13 3 14 10 1 9-7 15-15 15C10 33 6 28 5 23z" fill="#e8651c"/><path d="M9 24c-1-6 4-9 8-8 0-2 5-1 5 3s-7 4-8 3c0 4 7 6 12 2-3 6-14 8-17 0z" fill="#f5b62c"/></svg></span>
  <span class="tk"><svg viewBox="0 0 32 36" width="29" height="33"><rect x="3" y="2" width="26" height="32" fill="#eef2f6" stroke="#9aa6b4"/><rect x="6" y="6" width="4" height="4" fill="#4a7ac0"/><rect x="11" y="6" width="4" height="4" fill="#e8a030"/><rect x="17" y="6" width="4" height="4" fill="#c04040"/><rect x="23" y="6" width="4" height="4" fill="#8a5a30"/><rect x="6" y="13" width="4" height="4" fill="#4a7ac0"/><rect x="11" y="13" width="4" height="4" fill="#4ab050"/><rect x="17" y="13" width="4" height="4" fill="#c04040"/><rect x="23" y="13" width="4" height="4" fill="#4a7ac0"/><rect x="6" y="20" width="4" height="4" fill="#4a7ac0"/><rect x="11" y="20" width="4" height="4" fill="#e8a030"/><rect x="17" y="20" width="4" height="4" fill="#4ab050"/><rect x="23" y="20" width="4" height="4" fill="#c04040"/><rect x="6" y="27" width="21" height="3" fill="#b8c4d0"/></svg></span>
  <span class="tk"><svg viewBox="0 0 36 36" width="33" height="33"><circle cx="18" cy="18" r="16" fill="#e0402c"/><path d="M18 18 4 26A16 16 0 0 1 6 7z" fill="#e0402c"/><path d="M18 34A16 16 0 0 1 4 26l8-4 6 4 6-1z" fill="#3ea63e"/><path d="M34 18a16 16 0 0 1-16 16l6-9 2-7-2-6h9z" fill="#f4c430"/><circle cx="18" cy="18" r="7.500" fill="#fff"/><circle cx="18" cy="18" r="6" fill="#3f86e0"/></svg></span>
  <span class="tk tk-lit"><svg width="31" height="39" viewBox="0 0 32 40"><use href="#rb-doc"/></svg></span>
  <i class="tk-div"></i>
  <span class="tk tk-on"><svg viewBox="0 0 36 36" width="33" height="33"><circle cx="17" cy="16" r="14" fill="#14a6e3"/><text class="sky-s" x="17" y="25" text-anchor="middle">S</text><rect x="21" y="19" width="11" height="14" rx="1" fill="#f4f0c8" stroke="#9fbf3a" stroke-width="1.500" transform="rotate(-12 26 26)"/></svg></span>
  <span class="tk tk-on"><svg viewBox="0 0 36 36" width="33" height="33"><path d="M16 2c9-1 13 7 9 15-1-6-4-11-9-15z" fill="#1f3f9a"/><path d="M15 10l10 12-10 13L5 22z" fill="#39d13c"/><path d="M15 10v25L5 22z" fill="#18a022"/></svg></span>
  <span class="tk tk-on"><svg viewBox="0 0 32 36" width="29" height="33"><path d="M5 2h20v30H5z" fill="#eef2f6" stroke="#9aa6b4"/><path d="M8 7h5M15 7h5M8 12h5M15 12h5M8 17h5" stroke="#333" stroke-width="2"/><rect x="8" y="22" width="3" height="8" fill="#c04040"/><rect x="13" y="19" width="3" height="11" fill="#3fa03f"/><rect x="18" y="24" width="3" height="6" fill="#2f7fd0"/><circle cx="23" cy="15" r="4" fill="none" stroke="#666" stroke-width="2"/><path d="M23 19v9" stroke="#666" stroke-width="2"/></svg></span>
  <div class="tray">
    <span class="tray-en">EN</span>
    <svg viewBox="0 0 16 16" width="15" height="15"><circle cx="8" cy="8" r="7" fill="#1f3fb0" stroke="#dfe8f4"/><text class="tray-q" x="8" y="12" text-anchor="middle">?</text></svg>
    <span class="tray-stack"><svg viewBox="0 0 10 8" width="9" height="8"><path d="M3 1h6v4H3zM1 3h6v4H1z" fill="none" stroke="#dfe8f4"/></svg><svg viewBox="0 0 8 8" width="6" height="6" class="tray-ar"><use href="#tri-d"/></svg></span>
    <svg viewBox="0 0 8 8" width="7" height="7" class="tray-ar"><use href="#tri-u"/></svg>
    <svg viewBox="0 0 16 18" width="15" height="17"><path d="M3 1v16" stroke="#eee" stroke-width="1.500"/><path d="M4 2h8l-2 3 2 3H4z" fill="#f2f2f2"/><rect x="7" y="8" width="8" height="9" rx="1" fill="#d02020"/><path d="M9 10l4 5M13 10l-4 5" stroke="#fff" stroke-width="1.300"/></svg>
    <svg viewBox="0 0 16 18" width="15" height="17"><rect x="3" y="4" width="10" height="12" fill="none" stroke="#eee" stroke-width="1.500"/><rect x="5" y="7" width="6" height="7" fill="#eee"/><path d="M6 1v3M10 1v3" stroke="#eee" stroke-width="1.500"/></svg>
    <svg viewBox="0 0 16 16" width="14" height="14"><rect x="1" y="11" width="2" height="3" fill="#eee"/><rect x="4" y="9" width="2" height="5" fill="#eee"/><rect x="7" y="7" width="2" height="7" fill="#eee"/><rect x="10" y="4" width="2" height="10" fill="#8a98a6"/><rect x="13" y="2" width="2" height="12" fill="#8a98a6"/></svg>
    <div class="clock"><span>4:11 PM</span><span>04/10/2013</span></div>
    <span class="showdesk"></span>
  </div>
</footer>
</body>
</html>
```

FILE: styles.css
```css
* { box-sizing: border-box; }
html, body { margin: 0; padding: 0; }
body {
  width: 1920px; height: 1200px; overflow: hidden;
  display: flex; flex-direction: column;
  background: #1d3a55;
  font-family: "Open Sans", "Noto Sans", sans-serif;
  font-size: 12px; color: #111;
}
.defs { position: absolute; }
svg { display: block; flex: none; }
i { display: block; font-style: normal; }
h1, h2, h3 { margin: 0; }

.desktop { position: relative; height: 1161px; flex: none; background: linear-gradient(90deg, #2a5f8a, #1c4c74); }
.win { position: absolute; top: 0; display: flex; flex-direction: column; overflow: hidden; }

/* ---------- Crystal Reports ---------- */
.cr {
  left: 0; width: 960px; height: 1158px;
  background: linear-gradient(90deg, #3f7fb0 0, #4b8fb4 50%, #5a9ab8 100%);
  border: 1px solid #1f4d70; border-radius: 7px 7px 0 0;
}
.cr-title { height: 27px; flex: none; display: flex; align-items: center; padding-left: 7px; position: relative;
  background: linear-gradient(90deg, #6ea3c4 0, #7aaec9 32%, #4d90b3 38%, #4f92b4 70%, #6ba3bf 100%); }
.cr-appicon { width: 20px; height: 20px; }
.cr-title-text { margin-left: 2px; font-size: 11.500px; color: #0c1a24; text-shadow: 0 0 6px #b8d8e8, 0 0 10px #b8d8e8; white-space: nowrap; }
.cr-ctrl { margin-left: auto; margin-right: 1px; align-self: flex-start; display: flex; height: 20px;
  border: 1px solid #3d6f8f; border-top: 0; border-radius: 0 0 5px 5px; background: linear-gradient(#78aac6, #5a93b1); }
.cc { display: flex; align-items: center; justify-content: center; height: 19px; border-right: 1px solid #3d6f8f; }
.cc:last-child { border-right: 0; }
.cc-min { width: 28px; } .cc-max { width: 27px; } .cc-close { width: 45px; }
.cc-min i { width: 11px; height: 5px; margin-top: 5px; background: #fff; border: 1px solid #45687e; }
.cc-max i { width: 12px; height: 10px; background: #5d94b0; border: 2px solid #fff; outline: 1px solid #45687e; }
.cr-client { flex: 1; min-height: 0; margin: 0 3px 3px 6px; background: #f0f0f0; border: 1px solid #a5b3bd; display: flex; flex-direction: column; }

.menu { height: 25px; flex: none; display: flex; align-items: center; gap: 18px; background: #e9e9e9; font-size: 11.600px; padding-left: 5px; color: #111; }
.menu-icon { width: 20px; height: 20px; margin-right: -13px; }
.tb { display: flex; align-items: center; flex: none; height: 26px; background: linear-gradient(#fdfdfd, #f1f1f1 45%, #d9d9d9); }
.tb1 { padding-left: 1px; border-radius: 3px; margin-right: 5px; }
.tb2-row { height: 27px; flex: none; background: #ececec; display: flex; border-bottom: 1px solid #aaa; }
.tb2 { padding-left: 3px; width: 730px; height: 26px; border-radius: 3px; }
.grip { width: 3px; height: 17px; margin: 0 3px; flex: none; background: repeating-linear-gradient(#9d9d9d 0 2px, transparent 2px 4px); }
.ti { width: 23px; height: 18px; padding: 0 2.500px; flex: none; }
.ti-w { width: 26px; }
.off { opacity: .8; }
.arrow { width: 10px; height: 8px; fill: #222; flex: none; margin-left: -2px; margin-right: 1px; }
.arrow.off { fill: #999; }
.arrow-w { margin-left: 2px; margin-right: 5px; }
.sep { width: 1px; height: 18px; margin: 0 5px 0 3px; flex: none; background: #a0a0a0; box-shadow: 1px 0 #fff; }
.xp1 { font: bold 9px "Liberation Sans", sans-serif; fill: #1a2f9a; }
.chev { width: 12px; height: 26px; margin-left: 7px; flex: none; display: flex; justify-content: center; padding-top: 7px; background: linear-gradient(90deg, #bbb, #999 60%, #bbb); border-radius: 2px; }
.zoombox { width: 54px; height: 16px; flex: none; display: flex; justify-content: space-between; align-items: center; background: #fff; font-size: 12.500px; padding-left: 4px; }
.zoombox b { font-weight: 400; }
.zoombtn { width: 12px; height: 16px; background: #eee; display: flex; align-items: center; justify-content: center; }
.combo { height: 19px; flex: none; border: 1px solid #b8b8b8; background: #e9e9e9; display: flex; justify-content: flex-end; }
.combo-btn { width: 13px; display: flex; align-items: center; justify-content: center; fill: #999; background: #dcdcdc; }
.combo-font { width: 156px; margin-left: 1px; }
.combo-size { width: 51px; margin: 0 3px; }
.gt { font-family: "Liberation Sans", sans-serif; font-size: 15px; fill: #8a8a8a; }
.gt-b { font-weight: 700; }
.gt-i { font-style: italic; font-weight: 700; }
.gt-u { font-weight: 700; }
.gt-wide { font-size: 14px; }

.tabs { height: 24px; flex: none; display: flex; align-items: flex-end; padding-left: 15px; background: linear-gradient(#f6f6f6, #ebebeb); border-bottom: 1px solid #8d8d8d; position: relative; z-index: 0; }
.tab { position: relative; height: 22px; line-height: 21px; padding: 0 10px 0 14px; font-size: 11.800px; border: 1px solid #8d8d8d; border-bottom: 0; border-left: 0; border-radius: 0 3px 0 0; background: linear-gradient(#f8f8f8, #e8e8e8); color: #111; }
.tab::before { content: ""; position: absolute; z-index: -1; left: -8px; top: -1px; width: 22px; height: 22px; background: #f2f2f2; border-left: 1px solid #8d8d8d; border-top: 1px solid #8d8d8d; transform: skewX(-40deg); border-radius: 2px 0 0 0; }
.tab-2 { margin-left: 1px; padding: 0 12px 0 13px; }
.tab-on { margin-left: -8px; height: 23px; margin-bottom: -1px; padding: 0 9px 0 16px; font-weight: 700; background: #fff; display: flex; align-items: center; gap: 14px; z-index: 2; font-size: 12.250px; }
.tab-on::before { background: #fff; left: -5px; width: 26px; height: 23px; }
.tabs-nav { margin-left: auto; margin-right: 13px; margin-bottom: 6px; display: flex; gap: 7px; }

.subtabs { height: 23px; flex: none; display: flex; align-items: center; margin: 0 0 0 5px; border-top: 2px solid #999; border-left: 1px solid #aaa; background: linear-gradient(#fff, #ededed); font-size: 11.600px; color: #6a6a6a; }
.st { height: 21px; line-height: 21px; white-space: nowrap; padding: 0 6px; }
.st-dim { padding: 0 8px 0 3px; }
.st-on { background: #f4f4f4; color: #111; display: flex; align-items: center; gap: 4px; padding: 0 5px; border-right: 1px solid #bbb; }
.st-doc { border-right: 1px solid #b0b0b0; height: 15px; line-height: 15px; padding: 0 5px 0 6px; }
.subnav { margin-left: auto; display: flex; align-items: center; gap: 1px; padding-right: 1px; }
.grip-s { width: 3px; height: 13px; margin: 0 2px; background: repeating-linear-gradient(#444 0 2px, transparent 2px 4px); }
.ni { width: 18px; height: 18px; }
.nv { width: 18px; height: 12px; }
.pager { width: 105px; height: 21px; line-height: 21px; background: #fff; text-align: center; color: #111; font-size: 11.800px; margin: 0 1px; padding-right: 1px; border-left: 1px solid #ccc; }

.cr-body { flex: 1; min-height: 0; display: flex; margin-left: 5px; }
.gutter { width: 80px; flex: none; padding-left: 8px; background: linear-gradient(90deg, #f6f6f6, #fff 6%, #c9c9c9 7%, #f5f5f5 8%, #f5f5f5); overflow: hidden; }
.gutter-in { background: #f0f0f0; border-left: 1px solid #c8c8c8; font-size: 11px; color: #222; }
.gs { border-top: 1px solid #9a9a9a; padding: 2px 0 0 0; text-align: center; font-family: "Liberation Sans", sans-serif; overflow: hidden; margin-right: 3px; }
.gs-top { height: 61px; border-top-color: transparent; }
.gs-rha { height: 146px; text-align: left; padding-left: 27px; }
.gs-rhb { height: 325px; margin-left: 23px; text-align: left; padding-left: 4px; }
.gs-ph { height: 86px; text-align: left; padding-left: 27px; }
.gbox { border-top: 1px solid #9a9a9a; border-left: 1px solid #9a9a9a; margin-right: 3px; }
.gbox .gbox, .gbox .gs { margin-right: 0; }
.g1 { height: 342px; margin-left: 4px; }
.g2 { height: 261px; margin-left: 3px; border-bottom: 1px solid #9a9a9a; }
.g3 { height: 55px; margin-left: 3px; border-bottom: 1px solid #9a9a9a; }
.g1 > .gs { border-top: 0; text-align: left; padding-left: 22px; }
.g2 > .gs { border-top: 0; text-align: left; padding-left: 19px; }
.g3 > .gs { border-top: 0; text-align: left; padding-left: 15px; }
.g1 > .gs-gh1 { height: 63px; }
.g2 > .gs-gh2 { height: 29px; }
.g3 > .gs-gh3 { height: 27px; }
.g3 > .gs-gh3b { height: 27px; border-top: 1px solid #9a9a9a; }
.g2 > .gs-gf2 { height: 45px; }
.g2 > .gs-line { border-top: 1px solid #9a9a9a; height: 30px; }
.g3-line { margin-top: 0; }
.g1 > .gs-gap { height: 15px; }
.gs-pf { height: 40px; text-align: left; padding-left: 27px; }

.view { flex: 1; min-width: 0; background: #9d9d9d; padding: 12px 0 0 10px; overflow: hidden; }
.page { background: #fff; border: 1px solid #000; border-bottom: 0; overflow: hidden; font-family: "Liberation Sans", Arial, sans-serif; color: #000; }
.page-l { width: 820px; height: 970px; border-right-width: 2px; border-top-width: 2px; border-left-width: 1px; padding-top: 54px; }
.rep-head { display: flex; height: 74px; margin-left: 53px; }
.rep-head-l { width: 415px; flex: none; }
.rt { font: italic 700 26.800px/36px "Liberation Sans", Arial, sans-serif; color: #c2a87c; white-space: nowrap; }
.rt-rule { height: 2px; background: #000; margin-top: 5px; }
.rdate { font-size: 12.600px; line-height: 20px; margin-top: 4px; white-space: pre; }
.logo { margin-left: -2px; margin-top: -2px; overflow: visible; }
.lg-treme { font: 900 47px "DejaVu Serif", serif; fill: #0a0a0a; stroke: #0a0a0a; stroke-width: 1.200px; }
.lg-mb { font: 400 20px "Open Sans", sans-serif; fill: #111; }
.rh { font: 700 19.400px/30px "Liberation Sans", Arial, sans-serif; color: #006666; margin-left: 53px; white-space: nowrap; }
.rh-1 { margin-top: 18px; }
.rh-2 { margin-top: 19px; }
.chart { margin-top: 16px; }
.chart text { font-family: "Liberation Sans", Arial, sans-serif; }
.chart-l { margin-top: 16px; }
.cl-title { font-size: 19.400px; font-weight: 700; }
.cl-ax { font-size: 10px; }
.rdate-2 { margin-left: 53px; margin-top: 19px; }
.rq { font: 700 19.400px/30px "Liberation Sans", Arial, sans-serif; margin: 16px 0 0 53px; white-space: nowrap; }
.rtable { margin: 9px 0 0 50px; width: 711px; }
.rhead { height: 20px; background: #808000; color: #fff; font-size: 13.300px; font-weight: 700; line-height: 22px; display: flex; white-space: nowrap; }
.c-emp { width: 198px; padding-left: 18px; }
.c-pt { width: 160px; }
.c-amt { width: 102px; text-align: right; }
.c-mon { margin-left: 78px; }
.grp { height: 130px; }
.g-top { height: 35px; display: flex; justify-content: space-between; padding-left: 14px; }
.emp { font-size: 19.400px; font-weight: 700; color: #993333; line-height: 36px; white-space: nowrap; }
.btn { width: 237px; height: 25px; margin: 5px -2px 0 0; padding-left: 1px; background: #f00; border: 1px solid #000; color: #fff; font-size: 15.700px; font-weight: 700; line-height: 20px; white-space: nowrap; }
.g-line { width: 460px; height: 28px; padding-left: 198px; display: flex; justify-content: space-between; align-items: center; font-size: 14.400px; font-weight: 700; }
.g-sum { width: 126px; margin: -3px 0 0 334px; border-top: 1px solid #000; font-size: 19.600px; font-weight: 700; line-height: 24px; color: #960000; text-align: right; }
.g-rule { height: 2px; margin: 8px 0 0 142px; background: #0e6b6b; }
.rfoot { height: 3px; width: 718px; margin-top: 21px; background: #000; }
.rlinks { display: flex; font-size: 13px; color: #0000ee; margin-top: 4px; height: 16px; }
.lk-a { width: 198px; padding-left: 79px; color: #111; }
.lk-b { width: 320px; }

.vscroll { width: 20px; flex: none; display: flex; flex-direction: column; background: #e9e9e9; border-left: 1px solid #bbb; }
.sb-arrow { height: 17px; flex: none; display: flex; align-items: center; justify-content: center; fill: #444; }
.sb-track { flex: 1; min-height: 0; padding: 13px 1px 90px; background: #ececec; display: flex; }
.sb-thumb { flex: 1; background: linear-gradient(90deg, #f6f6f6, #e2e2e2 50%, #cfcfcf); border: 1px solid #9a9a9a; border-radius: 2px; display: flex; align-items: center; justify-content: center; }
.sb-grip { width: 7px; height: 7px; background: repeating-linear-gradient(#777 0 1px, transparent 1px 2px); }

.cr-status { height: 20px; flex: none; display: flex; background: #f0f0f0; font-size: 11.600px; margin-top: 6px; border-top: 1px solid #ccc; padding: 1px 2px 0 0; }
.sc { height: 19px; line-height: 18px; white-space: pre; border: 1px solid #c4c4c4; border-left-color: #9a9a9a; border-top-color: #9a9a9a; margin-right: 2px; flex: none; padding-left: 1px; }
.sc-help { width: 490px; border: 0; padding-left: 4px; margin-right: 0; }
.sc-date { width: 150px; }
.sc-blank { width: 156px; }
.sc-rec { width: 120px; }
.sc-mini { width: 8px; }

/* ---------- Report Builder ---------- */
.rb {
  left: 965px; width: 952px; height: 1160px;
  background: linear-gradient(#d3e3f8, #bfd4f1);
  border: 1px solid #5d87bc; border-radius: 7px 7px 0 0; color: #15428b;
}
.rb-title { height: 29px; flex: none; display: flex; align-items: center; position: relative; background: linear-gradient(#e0ecfb, #c8dcf6); border-bottom: 1px solid #8dadd9; }
.orb { position: absolute; left: 9px; top: 7px; z-index: 3; }
.qat { margin-left: 34px; width: 116px; height: 23px; display: flex; align-items: center; gap: 9px; padding-left: 31px; border: 1px solid #8db2e3; border-left: 0; border-radius: 0 12px 12px 0; background: linear-gradient(#e5f0fd, #c9dcf6); }
.rb-title-text { margin-left: 195px; font-size: 10.750px; white-space: nowrap; color: #15428b; }
.rb-ctrl { margin-left: auto; display: flex; gap: 10px; padding-right: 11px; }
.rc { width: 14px; }
.rb-tabs { height: 26px; flex: none; display: flex; align-items: flex-end; padding-left: 54px; background: #bfd5f3; position: relative; }
.rb-tab { width: 50px; height: 23px; line-height: 22px; text-align: center; font-size: 11.500px; background: linear-gradient(#fbfdff, #d9e7fa); border: 1px solid #8db2e3; border-bottom: 0; border-radius: 3px 3px 0 0; position: relative; top: 1px; }
.rb-help { margin-left: auto; margin-right: 9px; margin-bottom: 3px; }
.rb-help-q { font: 700 11px "Liberation Sans", sans-serif; fill: #fff; }
.ribbon { height: 92px; flex: none; margin: 0 4px 0 6px; display: flex; gap: 2px; padding: 2px 2px 1px 2px; background: linear-gradient(#dbe8fb, #c7dbf6); border: 1px solid #8db2e3; border-radius: 4px 4px 2px 2px; }
.rg { display: flex; flex-direction: column; border: 1px solid #a9c8f3; border-radius: 3px; background: linear-gradient(#e2eefd, #d2e3fb); flex: none; }
.rg-in { flex: 1; min-height: 0; display: flex; padding-top: 2px; }
.rg-lab { height: 15px; flex: none; line-height: 15px; text-align: center; font-size: 11px; color: #15428b; background: #c3d9f6; }
.rg-views { width: 53px; } .rg-zoom { width: 46px; } .rg-nav { width: 364px; }
.rg-print { width: 135px; } .rg-export { width: 50px; } .rg-opt { width: 113px; } .rg-find { width: 110px; }
.rg-views .big, .rg-zoom .big, .rg-export .big { width: 100%; }
.big { display: flex; flex-direction: column; align-items: center; flex: none; font-size: 11px; line-height: 15px; text-align: center; color: #15428b; padding-top: 1px; }
.big-i { width: 32px; height: 32px; margin-bottom: 2px; }
.big-nav { width: 40px; }
.big-off { color: #6e7f95; }
.big-nav:first-child { margin-left: 1px; margin-right: 3px; }
.big-off + .big-off { margin-right: 1px; width: 48px; }
.page-box { width: 52px; display: flex; flex-direction: column; align-items: center; margin-right: 2px; }
.page-input { width: 50px; height: 21px; margin-top: 3px; border: 1px solid #a9bbd6; padding: 0 3px; font: 11px "Liberation Sans", sans-serif; color: #000; background: #fff; }
.page-of { margin-top: 3px; font-size: 11px; white-space: pre; color: #111; margin-right: 10px; }
.big-nav + .big-nav:not(.big-off) { margin-left: 1px; }
.small-col { margin-left: 7px; display: flex; flex-direction: column; padding-top: 2px; gap: 10px; }
.sm { display: flex; align-items: center; gap: 5px; height: 16px; font-size: 11px; color: #15428b; white-space: nowrap; }
.sm-off { color: #7d8b9e; }
.dd { width: 7px; height: 7px; fill: #4b6a9a; margin-top: -1px; }
.big-pr { width: 42px; margin-top: 0; }
.big-pr + .big-pr { margin-left: 1px; }
.big-hot { background: linear-gradient(#fff3c9, #fbd24a 40%, #fcdd78 70%, #fff1c4); }
.rg-in-col { flex-direction: column; padding: 3px 0 0 7px; gap: 12px; }
.sm-wide { gap: 4px; }
.rg-in-find { align-items: flex-start; padding: 13px 0 0 4px; gap: 3px; }
.rg-in-find svg { margin-top: 3px; }
.find-box { width: 80px; height: 21px; border: 1px solid #a8a8a8; background: #eee; border-radius: 2px; }

.rb-body { flex: 1; min-height: 0; display: flex; margin: 0 4px 0 6px; }
.rb-view { flex: 1; min-width: 0; background: #808080; padding: 9px 0 0 61px; overflow: hidden; }
.page-r { width: 818px; height: 970px; border-right-width: 2px; padding-top: 137px; }
.page-r .rep-head { margin-left: 49px; }
.page-r .rt { font-size: 26.500px; }
.page-r .rdate { font-size: 12.300px; margin-top: 6px; }
.page-r .logo { margin-left: -2px; margin-top: -2px; }
.page-r .rh { margin-left: 49px; font-size: 18.500px; }
.chart-r { margin-top: 13px; }
.cr-ctitle { font-size: 13px; }
.cr-ax { font-size: 12.500px; }
.cr-leg { font-size: 11px; }
.page-r .rq { margin: 21px 0 0 49px; }
.page-r .rtable { margin: 10px 0 0 46px; width: 710px; }
.page-r .rhead { height: 20px; line-height: 20px; font-size: 13px; }
.page-r .grp { height: 129px; }
.page-r .g-top { height: 34px; }
.page-r .emp { line-height: 34px; }
.page-r .btn { width: 234px; height: 21px; margin: 7px -1px 0 0; line-height: 17px; }
.page-r .g-line { height: 27px; }
.page-r .g-sum { margin-top: -1px; line-height: 18px; }
.page-r .g-rule { margin-top: 16px; }
.page-r .rfoot { margin-top: 26px; }

.vscroll-r { width: 17px; }
.vscroll-r .sb-track { padding: 10px 1px 103px; }
.hscroll { height: 18px; flex: none; margin: 0 4px 0 6px; display: flex; align-items: center; background: #ececec; border-top: 1px solid #d0d0d0; }
.hscroll .sb-arrow { width: 18px; height: 16px; }
.hs-thumb { width: 870px; height: 15px; margin-right: 16px; background: linear-gradient(#f6f6f6, #e2e2e2 50%, #cfcfcf); border: 1px solid #9a9a9a; border-radius: 2px; display: flex; align-items: center; justify-content: center; }
.hs-grip { width: 7px; height: 7px; background: repeating-linear-gradient(90deg, #777 0 1px, transparent 1px 2px); }
.rb-status { height: 22px; flex: none; margin: 2px 4px 2px 6px; display: flex; align-items: center; background: linear-gradient(#dbe8fb, #b9d2f4 50%, #c9dcf7); font-size: 11.600px; color: #111; padding-left: 4px; }
.rb-st-text { margin-left: 2px; }
.rb-st-right { margin-left: auto; display: flex; align-items: center; height: 100%; padding: 0 5px 0 3px; border-left: 1px solid #9cb8dc; }
.st-ico { width: 20px; height: 20px; display: flex; align-items: center; justify-content: center; }
.st-ico-on { background: #fbd772; }
.rb-pct { margin: 0 8px 0 9px; }
.zb { width: 16px; height: 16px; border-radius: 50%; border: 1px solid #7f9dc4; background: linear-gradient(#fff, #c6d8f0); text-align: center; font: 700 13px/13px "Liberation Sans", sans-serif; color: #4a6a98; }
.slider { width: 112px; height: 1px; background: #5b82b6; position: relative; margin: 0 -1px; }
.slider i { position: absolute; left: 50px; top: -6px; width: 8px; height: 13px; background: linear-gradient(#fff, #c6d8f0); border: 1px solid #6f8fb8; border-radius: 1px 1px 4px 4px; }

/* ---------- Taskbar ---------- */
.taskbar { height: 39px; flex: none; display: flex; align-items: center; gap: 3px; padding-left: 60px; position: relative;
  background: linear-gradient(90deg, #2b4256 0, #24394c 30%, #2e4458 52%, #26394b 75%, #2f4558 88%, #2a3d4e 100%);
  border-top: 1px solid #5d7488; }
.start { position: absolute; left: 7px; top: 0; }
.tk { width: 59px; height: 38px; flex: none; display: flex; align-items: center; justify-content: center; border-radius: 2px; }
.tk-on { background: linear-gradient(#5d7185, #3c5166 55%, #33475a); box-shadow: inset 0 0 0 1px #8296a8; }
.tk-lit { background: linear-gradient(#e9edf1, #bcc6d0); width: 52px; box-shadow: inset 0 0 0 1px #f4f6f8; }
.tk-div { width: 3px; height: 38px; margin: 0 0 0 1px; flex: none; background: repeating-linear-gradient(90deg, #6d7f90 0 1px, #25384a 1px 2px); }
.ie-e { font: italic 700 38px "Liberation Serif", serif; fill: #4aaae8; stroke: #1a5fa8; stroke-width: .6px; }
.sky-s { font: 700 26px "Liberation Sans", sans-serif; fill: #fff; }
.tray { margin-left: auto; display: flex; align-items: center; gap: 9px; height: 100%; color: #eef3f8; }
.tray-en { font-size: 11.500px; font-family: "Liberation Sans", sans-serif; }
.tray-q { font: 700 11px "Liberation Sans", sans-serif; fill: #fff; }
.tray-stack { display: flex; flex-direction: column; align-items: center; gap: 6px; }
.tray-ar { fill: #eef3f8; }
.clock { width: 78px; display: flex; flex-direction: column; align-items: center; gap: 3px; font: 11.800px/14px "Liberation Sans", sans-serif; margin-left: 6px; }
.showdesk { width: 13px; height: 100%; background: linear-gradient(90deg, #3e5264, #2b3e50); border-left: 1px solid #7a8a9a; border-top: 1px solid #7a8a9a; }
```
